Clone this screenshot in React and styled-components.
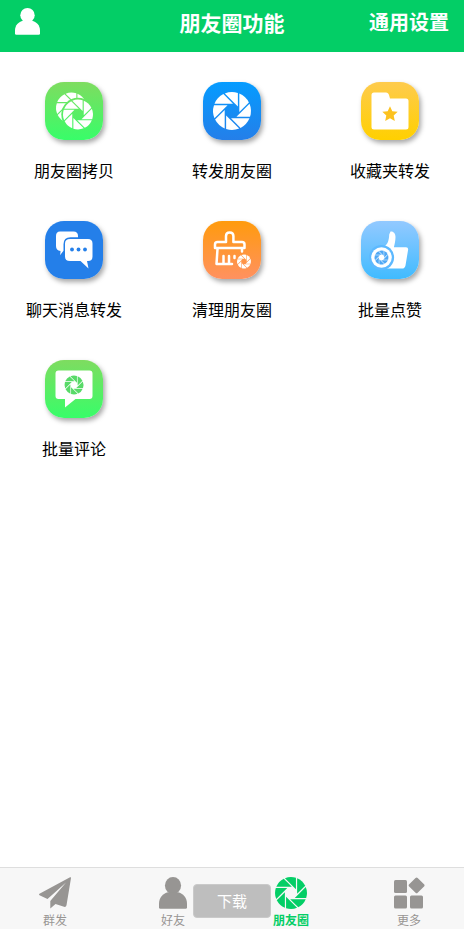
import styled, { createGlobalStyle } from 'styled-components';

const GlobalStyle = createGlobalStyle`
  * {
    box-sizing: border-box;
  }

  body {
    margin: 0;
    background: #fff;
    font-family: "Noto Sans CJK SC", "Noto Sans", sans-serif;
  }

  button {
    border: 0;
    padding: 0;
    background: none;
    font-family: inherit;
    cursor: pointer;
  }
`;

const Page = styled.div`
  position: relative;
  display: flex;
  flex-direction: column;
  min-height: 100vh;
`;

const Header = styled.header`
  display: grid;
  grid-template-columns: 1fr auto 1fr;
  align-items: start;
  padding: 8px 15px;
  height: 52px;
  background: #03ce66;
  color: #fff;
`;

const Title = styled.h1`
  margin: 0;
  font-size: 21px;
  line-height: 28px;
  font-weight: 700;
`;

const ProfileButton = styled.button`
  justify-self: start;
  color: #fff;

  svg {
    display: block;
    width: 25px;
    height: 27px;
  }
`;

const SettingsButton = styled.button`
  justify-self: end;
  color: #fff;
  font-size: 20px;
  line-height: 28px;
  font-weight: 700;
`;

const Features = styled.main`
  flex: 1;
  display: grid;
  grid-template-columns: repeat(3, 116px);
  justify-content: space-between;
  align-content: start;
  row-gap: 39px;
  padding: 30px 16px;
`;

const Feature = styled.button`
  display: flex;
  flex-direction: column;
  align-items: center;
  gap: 18px;
  color: #000;
  font-size: 16px;
  line-height: 24px;
  white-space: nowrap;
`;

const Tile = styled.span`
  display: block;
  width: 58px;
  height: 58px;
  border-radius: 19px;
  background: linear-gradient(${props => props.$from}, ${props => props.$to});
  box-shadow: 2px 3px 5px rgba(0, 0, 0, 0.35);

  svg {
    display: block;
  }
`;

const TabBar = styled.nav`
  display: flex;
  justify-content: space-between;
  height: 62px;
  padding: 9px 39px 0;
  background: #f7f7f7;
  border-top: 1px solid #dedede;
`;

const Tab = styled.button`
  display: flex;
  flex-direction: column;
  align-items: center;
  gap: 2px;
  width: 32px;
  color: ${props => (props.$active ? '#03ce66' : '#979593')};
  font-size: 12px;
  line-height: 18px;
  font-weight: ${props => (props.$active ? 700 : 400)};
  white-space: nowrap;

  svg {
    display: block;
    flex: none;
  }
`;

const DownloadButton = styled.button`
  position: absolute;
  left: 50%;
  bottom: 11px;
  transform: translateX(-50%);
  width: 78px;
  height: 34px;
  border: 1px solid #cacaca;
  border-radius: 4px;
  background: #bebebe;
  color: #fff;
  font-size: 15px;
  line-height: 22px;
`;

const angles = [0, 45, 90, 135, 180, 225, 270, 315];

// Camera shutter: one blade of a 19 unit circle, repeated around the centre.
function Shutter({ cx = 20, cy = 20, r = 19, fill = 'currentColor' }) {
  return (
    <g transform={`translate(${cx} ${cy}) scale(${r / 19})`} fill={fill}>
      {angles.map(angle => (
        <path
          key={angle}
          transform={`rotate(${angle})`}
          d="M-17.5 -7.3A19 19 0 0 1 -8.6 -16.9L1 -7.3Z"
        />
      ))}
    </g>
  );
}

function PersonIcon({ width = 32, height = 32 }) {
  return (
    <svg width={width} height={height} viewBox="0 0 25 27" preserveAspectRatio="none" fill="currentColor" aria-hidden="true">
      <circle cx="12.5" cy="7.2" r="7.2" />
      <path d="M8 12.800h9c4.500 1 8 4.500 8 9.700v3a1.300 1.300 0 0 1-1.300 1.300H1.300A1.300 1.300 0 0 1 0 25.500v-3c0-5.200 3.500-8.700 8-9.700z" />
    </svg>
  );
}

function CopyIcon() {
  return (
    <>
      <mask id="copy-back">
        <rect width="58" height="58" fill="#fff" />
        <circle cx="33" cy="32.500" r="16.700" fill="#000" />
      </mask>
      <g mask="url(#copy-back)">
        <Shutter cx={26.5} cy={26} r={15.5} fill="#fff" />
      </g>
      <Shutter cx={33} cy={32.5} r={15} fill="#fff" />
    </>
  );
}

function FolderIcon() {
  return (
    <>
      <path fill="#fff" d="M13 10.500h12c1.500 0 2.500 1 3 2.500l1 3.500h16a2.500 2.500 0 0 1 2.500 2.500v26a2.500 2.500 0 0 1-2.500 2.500H13a2.500 2.500 0 0 1-2.500-2.500V13a2.500 2.500 0 0 1 2.500-2.500z" />
      <path fill="#fcc21f" d="M29 24.200l2.300 5 5.400.6-4 3.700 1.100 5.400-4.800-2.700-4.800 2.700 1.100-5.400-4-3.700 5.400-.6z" />
    </>
  );
}

function ChatIcon() {
  return (
    <>
      <path fill="#fff" d="M15 10.500h13.500q4.500 0 4.500 4.500v1.200h-7.500q-7 0-7 7v6.500l-3.500 4.500q.5-2.500.5-4.300Q11 29.500 11 25V15q0-4.500 4-4.500z" />
      <path fill="#fff" d="M25 18h18q4.500 0 4.500 4.500v13q0 4.500-4.500 4.500h-1l1.500 7.500L35.500 40H25q-5 0-5-4.500v-13Q20 18 25 18z" />
      <circle cx="27" cy="28.500" r="1.900" fill="#247fe9" />
      <circle cx="33.500" cy="28.500" r="1.900" fill="#247fe9" />
      <circle cx="40" cy="28.500" r="1.900" fill="#247fe9" />
    </>
  );
}

function BroomIcon() {
  return (
    <>
      <g fill="none" stroke="#fff" strokeWidth="2.500" strokeLinejoin="round" strokeLinecap="round">
        <path d="M23 21v-6q0-3.500 3.700-3.500t3.700 3.500v6H39q2.500 0 2.500 2.500v3.500H12v-3.500q0-2.500 2.500-2.500z" />
        <path d="M14.500 28l-1 15H29M39 28v2.500M20.500 35v7.500M26 35v7.500M31.500 35v2" />
      </g>
      <Shutter cx={41} cy={40.5} r={7} fill="#fff" />
    </>
  );
}

function LikeIcon() {
  return (
    <>
      <path fill="#fff" d="M29.500 10.500c3-.5 5 2 5 5.500 0 3.500-.8 7-1.600 10.300H45q2.500 0 2.100 2.500l-2.600 15.600q-.6 3.100-3.500 3.100H23V26c4-3 5-7 5.200-12.500z" />
      <circle cx="20.500" cy="36.500" r="12.600" fill="#5db9ff" />
      <circle cx="20.500" cy="36.500" r="10.300" fill="#fff" />
      <Shutter cx={20.5} cy={36.5} r={7} fill="#50a8f5" />
    </>
  );
}

function CommentIcon() {
  return (
    <>
      <path fill="#fff" d="M13.500 10.500h31a3 3 0 0 1 3 3v22.500a3 3 0 0 1-3 3H30.500l-10.500 8.500v-8.500h-6.500a3 3 0 0 1-3-3V13.500a3 3 0 0 1 3-3z" />
      <Shutter cx={29} cy={25} r={9.5} fill="#58da68" />
    </>
  );
}

const features = [
  { label: '朋友圈拷贝', from: '#7edc60', to: '#38fd69', icon: <CopyIcon /> },
  { label: '转发朋友圈', from: '#059cff', to: '#247fe9', icon: <Shutter cx={29} cy={29} fill="#fff" /> },
  { label: '收藏夹转发', from: '#fecb4d', to: '#ffd000', icon: <FolderIcon /> },
  { label: '聊天消息转发', from: '#247fe9', to: '#247fe9', icon: <ChatIcon /> },
  { label: '清理朋友圈', from: '#ff9b0d', to: '#ff9160', icon: <BroomIcon /> },
  { label: '批量点赞', from: '#93c9ff', to: '#40bbff', icon: <LikeIcon /> },
  { label: '批量评论', from: '#7edc60', to: '#38fd69', icon: <CommentIcon /> },
];

export default function App() {
  return (
    <>
      <GlobalStyle />
      <Page>
        <Header>
          <ProfileButton aria-label="我的">
            <PersonIcon />
          </ProfileButton>
          <Title>朋友圈功能</Title>
          <SettingsButton>通用设置</SettingsButton>
        </Header>

        <Features>
          {features.map(({ label, from, to, icon }) => (
            <Feature key={label}>
              <Tile $from={from} $to={to}>
                <svg width="58" height="58" viewBox="0 0 58 58" aria-hidden="true">{icon}</svg>
              </Tile>
              {label}
            </Feature>
          ))}
        </Features>

        <TabBar>
          <Tab>
            <svg width="32" height="32" viewBox="0 0 32 32" fill="currentColor" aria-hidden="true">
              <path d="M31.500 0L0 17q0 1 1 1.500l7.500 3.500L27 5.500 11.300 24v7.500L16.500 27l8.500 2.800q2 .5 2.500-1.500L32 1z" />
            </svg>
            群发
          </Tab>
          <Tab>
            <PersonIcon width={28} />
            好友
          </Tab>
          <Tab $active>
            <svg width="32" height="32" viewBox="0 0 40 40" aria-hidden="true">
              <Shutter r={20} />
            </svg>
            朋友圈
          </Tab>
          <Tab>
            <svg width="32" height="32" viewBox="0 0 32 32" fill="currentColor" aria-hidden="true">
              <rect x="1" y="3" width="13" height="13" rx="1.500" />
              <rect x="1" y="18.500" width="13" height="13" rx="1.500" />
              <rect x="17" y="18.500" width="13" height="13" rx="1.500" />
              <rect x="17.600" y="2.400" width="12" height="12" rx="1.500" transform="rotate(45 23.600 8.400)" />
            </svg>
            更多
          </Tab>
        </TabBar>

        <DownloadButton>下载</DownloadButton>
      </Page>
    </>
  );
}
